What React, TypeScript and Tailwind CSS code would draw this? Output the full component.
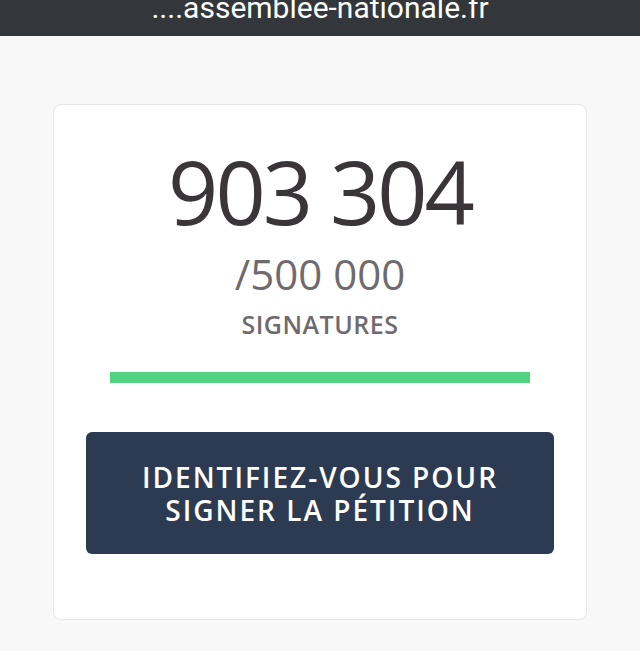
export default function App() {
  return (
    <div className="w-[640px] h-[651px] bg-[#f8f8f9] overflow-hidden flex flex-col" style={{ fontFamily: '"Open Sans", sans-serif' }}>
      <div className="h-[36px] bg-[#33363a] flex justify-center items-end overflow-hidden shrink-0">
        <span className="text-[30px] leading-none text-white mb-[13px]" style={{ fontFamily: 'Roboto, sans-serif' }}>....assemblee-nationale.fr</span>
      </div>
      <div className="pt-[68px] px-[53px]">
        <div className="bg-white border border-[#e6e6e6] rounded-[8px] h-[516px] flex flex-col items-center pt-[36px]">
          <div className="text-[88px] leading-[100px] text-[#3a3538] tracking-[-3px]">903 304</div>
          <div className="text-[42px] leading-[50px] text-[#6f6a6e] mt-[8px]">/500 000</div>
          <div className="text-[25px] leading-[32px] font-semibold text-[#6f6a6e] tracking-[0.5px] mt-[9px]">SIGNATURES</div>
          <div className="w-[420px] h-[11px] bg-[#52d383] mt-[32px]"></div>
          <button className="w-[468px] h-[122px] bg-[#2c3a52] rounded-[6px] mt-[49px] flex flex-col items-center justify-center text-white font-semibold text-[28px] leading-[33px] tracking-[2px] pt-[2px]">
            <span>IDENTIFIEZ-VOUS POUR</span>
            <span>SIGNER LA PÉTITION</span>
          </button>
        </div>
      </div>
    </div>
  );
}
